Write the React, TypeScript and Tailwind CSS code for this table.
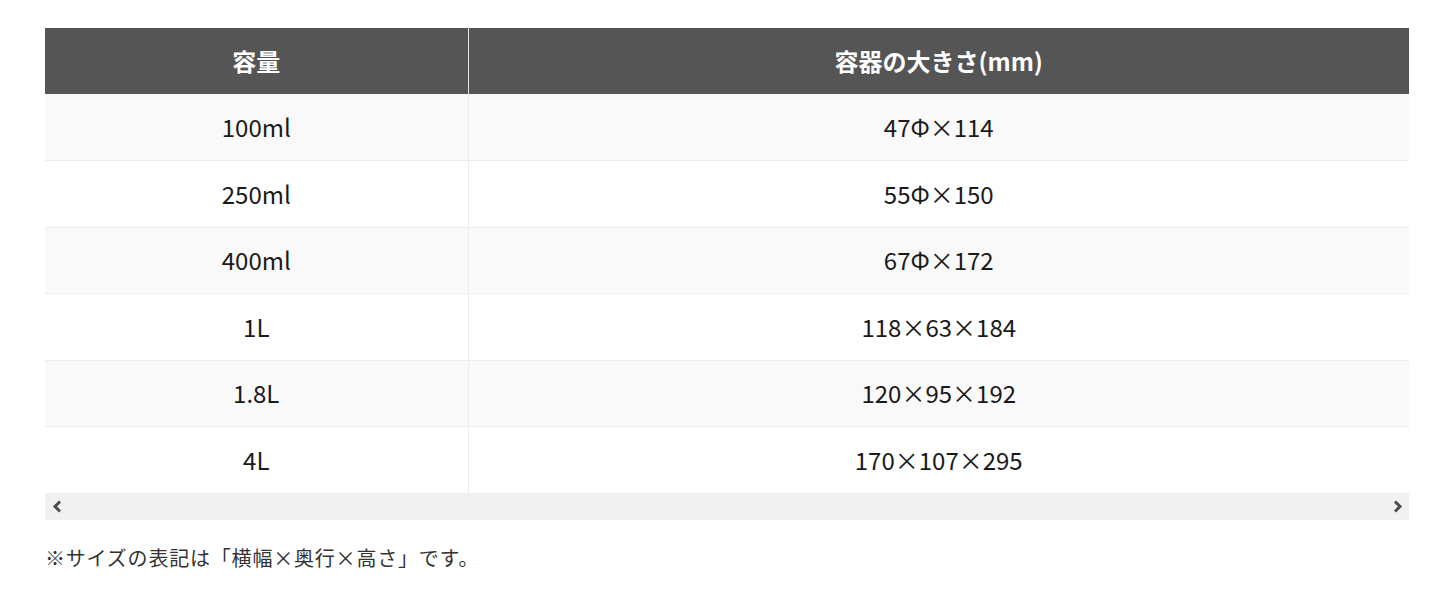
const rows = [
  { capacity: '100ml', size: '47Φ×114' },
  { capacity: '250ml', size: '55Φ×150' },
  { capacity: '400ml', size: '67Φ×172' },
  { capacity: '1L', size: '118×63×184' },
  { capacity: '1.8L', size: '120×95×192' },
  { capacity: '4L', size: '170×107×295' },
];

function Arrow({ dir }: { dir: 'left' | 'right' }) {
  return (
    <svg width="10" height="13" viewBox="0 0 10 13" className="text-[#4d4d4d]">
      <polyline
        points={dir === 'left' ? '8,1.5 3,6.5 8,11.5' : '2,1.5 7,6.5 2,11.5'}
        fill="none"
        stroke="currentColor"
        strokeWidth="3"
      />
    </svg>
  );
}

export default function App() {
  return (
    <div
      className="min-h-[592px] bg-white pt-[28px] pl-[45px] pr-[47px]"
      style={{ fontFamily: '"Noto Sans CJK JP", "Noto Sans", sans-serif' }}
    >
      <table className="w-full border-collapse text-center text-[24px] text-[#1a1a1a]">
        <thead>
          <tr className="bg-[#555555] text-white">
            <th className="w-[423px] h-[66px] border-r border-[#e5e5e5] font-bold">容量</th>
            <th className="h-[66px] font-bold">容器の大きさ(mm)</th>
          </tr>
        </thead>
        <tbody>
          {rows.map((row, i) => (
            <tr
              key={row.capacity}
              className={`${i % 2 === 0 ? 'bg-[#f9f9f9]' : 'bg-white'} border-b border-[#ededed] last:border-b-0`}
            >
              <td className="h-[66.5px] border-r border-[#ededed]">{row.capacity}</td>
              <td className="h-[66.5px]">{row.size}</td>
            </tr>
          ))}
        </tbody>
      </table>

      {/* horizontal scrollbar */}
      <div className="flex h-[27px] items-center justify-between bg-[#f1f1f1] pl-[7px] pr-[6px]">
        <Arrow dir="left" />
        <Arrow dir="right" />
      </div>

      <p className="mt-[23px] text-[20px] tracking-[0.04em] text-[#333333]">
        ※サイズの表記は「横幅×奥行×高さ」です。
      </p>
    </div>
  );
}
